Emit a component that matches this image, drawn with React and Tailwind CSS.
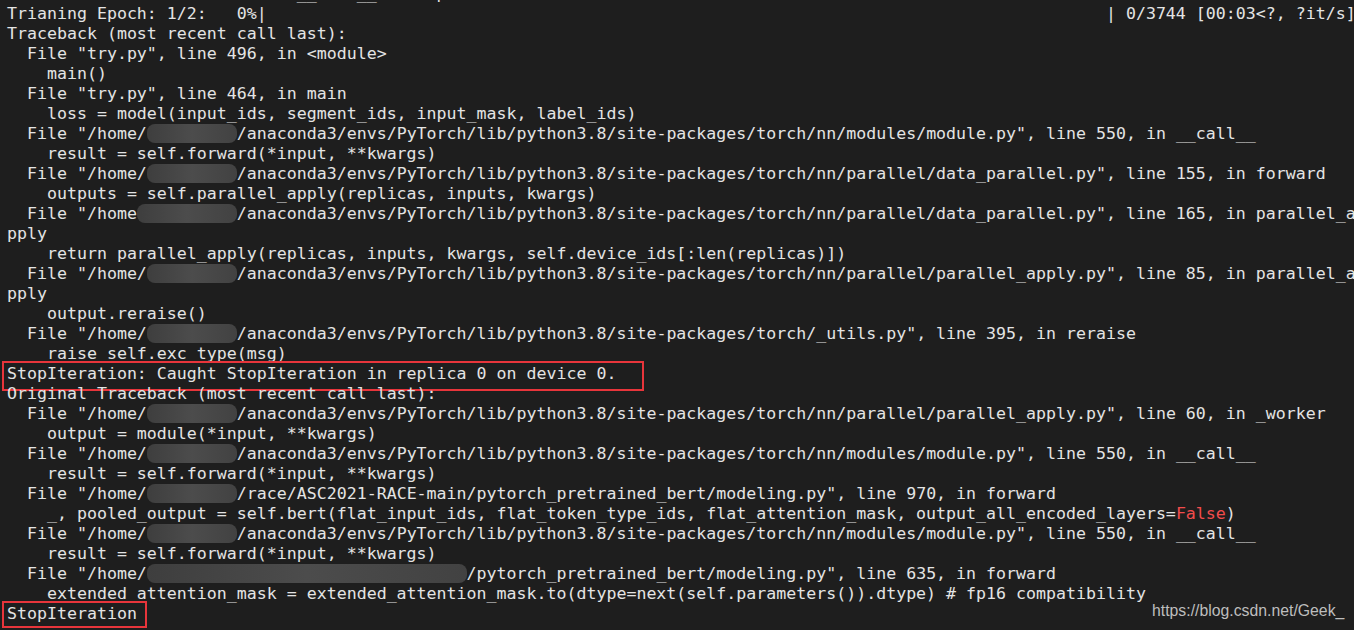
import React from "react";

const b = (n) => ({ blur: n });
const red = (t) => ({ red: t });

const lines = [
  [" ".repeat(29) + "__" + " ".repeat(4) + "__" + " ".repeat(6) + "p"],
  ["Trianing Epoch: 1/2:   0%|" + " ".repeat(84) + "| 0/3744 [00:03<?, ?it/s]"],
  ["Traceback (most recent call last):"],
  ['  File "try.py", line 496, in <module>'],
  ["    main()"],
  ['  File "try.py", line 464, in main'],
  ["    loss = model(input_ids, segment_ids, input_mask, label_ids)"],
  ['  File "/home/', b(9), '/anaconda3/envs/PyTorch/lib/python3.8/site-packages/torch/nn/modules/module.py", line 550, in __call__'],
  ["    result = self.forward(*input, **kwargs)"],
  ['  File "/home/', b(9), '/anaconda3/envs/PyTorch/lib/python3.8/site-packages/torch/nn/parallel/data_parallel.py", line 155, in forward'],
  ["    outputs = self.parallel_apply(replicas, inputs, kwargs)"],
  ['  File "/home', b(10), '/anaconda3/envs/PyTorch/lib/python3.8/site-packages/torch/nn/parallel/data_parallel.py", line 165, in parallel_a'],
  ["pply"],
  ["    return parallel_apply(replicas, inputs, kwargs, self.device_ids[:len(replicas)])"],
  ['  File "/home/', b(9), '/anaconda3/envs/PyTorch/lib/python3.8/site-packages/torch/nn/parallel/parallel_apply.py", line 85, in parallel_a'],
  ["pply"],
  ["    output.reraise()"],
  ['  File "/home/', b(9), '/anaconda3/envs/PyTorch/lib/python3.8/site-packages/torch/_utils.py", line 395, in reraise'],
  ["    raise self.exc_type(msg)"],
  ["StopIteration: Caught StopIteration in replica 0 on device 0.", { box: "w-[642px] h-[30px]" }],
  ["Original Traceback (most recent call last):"],
  ['  File "/home/', b(9), '/anaconda3/envs/PyTorch/lib/python3.8/site-packages/torch/nn/parallel/parallel_apply.py", line 60, in _worker'],
  ["    output = module(*input, **kwargs)"],
  ['  File "/home/', b(9), '/anaconda3/envs/PyTorch/lib/python3.8/site-packages/torch/nn/modules/module.py", line 550, in __call__'],
  ["    result = self.forward(*input, **kwargs)"],
  ['  File "/home/', b(9), '/race/ASC2021-RACE-main/pytorch_pretrained_bert/modeling.py", line 970, in forward'],
  ["    _, pooled_output = self.bert(flat_input_ids, flat_token_type_ids, flat_attention_mask, output_all_encoded_layers=", red("False"), ")"],
  ['  File "/home/', b(9), '/anaconda3/envs/PyTorch/lib/python3.8/site-packages/torch/nn/modules/module.py", line 550, in __call__'],
  ["    result = self.forward(*input, **kwargs)"],
  ['  File "/home/', b(32), '/pytorch_pretrained_bert/modeling.py", line 635, in forward'],
  ["    extended_attention_mask = extended_attention_mask.to(dtype=next(self.parameters()).dtype) # fp16 compatibility"],
  ["StopIteration", { box: "w-[145px] h-[27px]" }],
];

function Part({ p }) {
  if (typeof p === "string") return <span>{p}</span>;
  if (p.blur)
    return (
      <span className="bg-gradient-to-r from-[#3e3e3e] via-[#4c4c4c] to-[#424242] rounded-[8px] blur-[0.6px]">
        {" ".repeat(p.blur)}
      </span>
    );
  if (p.red) return <span className="text-[#f14c4c]">{p.red}</span>;
  if (p.box)
    return (
      <span
        className={
          "absolute left-[-5px] top-[-3px] border-2 border-[#e8353b] pointer-events-none " + p.box
        }
      />
    );
  return null;
}

export default function App() {
  return (
    <div className="relative w-[1354px] h-[630px] overflow-hidden bg-[#1e1e1e]">
      <div
        className="mt-[-16px] pl-[7px] text-[16.6px] leading-[20px] text-[#e4e4e4] whitespace-pre"
        style={{ fontFamily: '"DejaVu Sans Mono", monospace' }}
      >
        {lines.map((ln, i) => (
          <div key={i} className="relative h-[20px]">
            {ln.map((p, j) => (
              <Part key={j} p={p} />
            ))}
          </div>
        ))}
      </div>
      <div
        className="absolute left-[1152px] top-[601px] text-[15.8px] leading-[20px] text-[#bdbdbd]"
        style={{ fontFamily: '"Liberation Sans", Arial, sans-serif' }}
      >
        https://blog.csdn.net/Geek_
      </div>
    </div>
  );
}
